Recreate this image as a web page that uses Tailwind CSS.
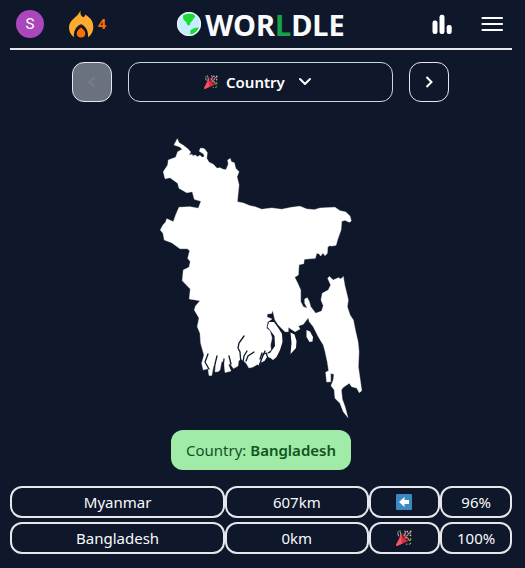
<!DOCTYPE html>
<html lang="en">
<head>
<meta charset="utf-8">
<meta name="viewport" content="width=device-width, initial-scale=1">
<title>Worldle</title>
<script src="https://cdn.jsdelivr.net/npm/@tailwindcss/browser@4"></script>
</head>
<body class="min-h-screen bg-[#0f172a] pr-[13px] pl-[10px] font-['Noto_Sans','Open_Sans',sans-serif] text-[15px] text-slate-50">
<svg class="hidden" aria-hidden="true">
  <symbol id="popper" viewBox="0 0 36 36">
    <path fill="#dd2e44" d="M11.6 7.6c-.2.2-.3.4-.4.6L.1 33.2c-.3 1.4 1 3 2.7 2.700L27.800 24.800c.2-.1.4-.2.6-.4 1.600-1.600-.9-6.600-5.400-11.200-4.700-4.600-9.800-7.200-11.400-5.600z"/>
    <path fill="#ea596e" d="M13 12 .4 32.600 0 33.700 2 36l12-5.500C12 25 11.500 18 13 12z"/>
    <path fill="#a0041e" d="M23 13.100c4.500 4.500 7 9.500 5.400 11.100-1.600 1.600-6.700-.9-11.200-5.400S10.400 9.400 12 7.800c1.500-1.600 6.600.8 11 5.300z"/>
    <path fill="none" stroke="#aa8dd8" stroke-width="2.600" stroke-linecap="round" d="M18 13c3-3 5-6 2-11M4 8l2 5"/>
    <path fill="none" stroke="#77b255" stroke-width="2.600" stroke-linecap="round" d="M10 14c3-3 0-6-1-12M20 18c4-3 8 0 9 4 1 3 5 2 4-3M30 32l3-2"/>
    <path fill="none" stroke="#aa8dd8" stroke-width="2.600" stroke-linecap="round" d="M22 14c2-2 5 0 5-4 0-3 3-4 6-3"/>
    <circle cx="25.500" cy="3.500" r="2" fill="#ffcc4d"/><circle cx="32.500" cy="12" r="2" fill="#ffcc4d"/><circle cx="5" cy="4" r="2" fill="#5c913b"/><circle cx="33" cy="3" r="2" fill="#ffcc4d"/><circle cx="24" cy="32" r="2" fill="#5c913b"/>
  </symbol>
</svg>

<header class="grid h-[50px] grid-cols-[1fr_auto_1fr] items-center border-b-2 border-gray-200">
  <div class="flex items-center pl-[6px]">
    <button class="flex size-7 items-center justify-center rounded-full bg-[#ab47bc] font-[Roboto,sans-serif] text-[15px] leading-none text-white" aria-label="Account">S</button>
    <div class="ml-6 flex items-center gap-1 text-sm font-bold text-[#ff6f00]">
      <svg class="h-7 w-[26px]" viewBox="0 0 26 28" aria-hidden="true">
        <path fill="#ffab30" d="M12.500.5c-.6 3.800.6 5.700 2.900 6.800 1.200-.4 1.700-1.500 1.600-2.800 6 3.500 8.300 7 8.300 12.500 0 4.300-1.700 7.800-5.300 10.200.6-5.500-2-11.200-7-12.900-4.900 1.700-7.700 7.300-7 12.900C2.700 24.700 1 21.500 1 17.500 1 9.500 9.300 8 12.500.5z"/>
        <path fill="#ff6f00" d="M13 17.500c2.700 2 4.300 4 4.300 6 0 2.600-1.900 4-4.300 4s-4.300-1.400-4.300-4c0-2 1.600-4 4.300-6z"/>
      </svg>
      <span>4</span>
    </div>
  </div>
  <h1 class="flex items-center gap-1 text-[29px] leading-none font-bold">
    <svg class="size-6" viewBox="0 0 24 24" aria-hidden="true">
      <circle cx="12" cy="12" r="12" fill="#c5ecff"/>
      <path fill="#1edb32" d="M6.200 3.500C8 1.700 15 1 17.800 3.300c.8 1.400 0 2.700-1.500 3.500-.4 2-1.800 3-3 3.800.3 1.400-.2 2.900-1.800 3-1.500-.4-1.600-2.300-2.800-4C6.500 8.500 5.500 5.500 6.200 3.500zM21.800 15.500c-3 .1-7 1-8.300 3-.9 1.400.3 2.300-.3 4 4.200-.4 7-3 8.600-7z"/>
      <circle cx="12" cy="12" r="11.600" fill="none" stroke="#fff" stroke-width=".8"/>
    </svg>
    <span>WOR<span class="text-[#16a34a]">L</span>DLE</span>
  </h1>
  <div class="flex items-center justify-end gap-[26px] pr-2">
    <button aria-label="Statistics">
      <svg class="size-6" viewBox="0 0 24 24" fill="#fff" aria-hidden="true"><rect x="2.500" y="8.500" width="5" height="13.500" rx="2.200"/><rect x="9.500" y="2.700" width="5" height="19.300" rx="2.200"/><rect x="16.700" y="13" width="5" height="9" rx="2.200"/></svg>
    </button>
    <button aria-label="Menu">
      <svg class="size-6" viewBox="0 0 24 24" fill="none" stroke="#fff" stroke-width="2.200" stroke-linecap="round" aria-hidden="true"><path d="M2.500 6h19.500M2.500 12h19.500M2.500 18h19.500"/></svg>
    </button>
  </div>
</header>

<main>
  <nav class="mt-3 grid grid-cols-[40px_1fr_40px] gap-4 pr-[63px] pl-[62px]">
    <button disabled aria-label="Previous round" class="flex h-10 items-center justify-center rounded-xl border border-gray-200 bg-gray-500">
      <svg class="size-4" viewBox="0 0 16 16" fill="none" stroke="#7c7c7c" stroke-width="2" aria-hidden="true"><path d="m10.500 3-5 5 5 5"/></svg>
    </button>
    <label class="flex h-10 items-center justify-center rounded-xl border border-slate-300 pr-1 font-semibold">
      <svg class="mr-2 size-[14px]" aria-hidden="true"><use href="#popper"/></svg>
      <select aria-label="Round" class="appearance-none bg-transparent text-white outline-none"><option>Country</option></select>
      <svg class="ml-3 size-4" viewBox="0 0 16 16" fill="none" stroke="#fff" stroke-width="2" stroke-linecap="round" stroke-linejoin="round" aria-hidden="true"><path d="m3 5 5 5 5-5"/></svg>
    </label>
    <button aria-label="Next round" class="flex h-10 items-center justify-center rounded-xl border border-gray-200">
      <svg class="size-4" viewBox="0 0 16 16" fill="none" stroke="#fff" stroke-width="2" aria-hidden="true"><path d="m5.500 3 5 5-5 5"/></svg>
    </button>
  </nav>

  <svg class="mx-auto mt-4 block h-[312px] w-[312px]" viewBox="105 118 312 312" role="img" aria-label="Country outline">
    <path fill="#fff" stroke="#fff" stroke-width=".4" stroke-linejoin="round" d="M177.300 138.700 179 142.700 183.300 145.300 187.700 148.700 190.700 152 189 155.300 192 154.200 193 156 195 155 197.700 156.700 200 155.300 202 157.300 204.300 156.700 203.700 154 199.300 151.300 200.300 148.300 203 148.200 205 149.300 207.300 152.700 206.700 158.300 209 162.300 213.300 164.300 217 168.300 220 167.700 223 169.300 226 169.700 228.300 164.300 227.700 160 230.300 158.500 231.300 161.700 234.300 162.700 235.700 168.300 239 171.700 237 176.700 239 185 237.300 201.700 243.300 203 250 205.700 255 206.700 261.700 209.300 271.700 208 281.700 209.300 291.700 207.300 300 206.300 306.700 209 314.300 209.700 320 208 335 207.300 340 210.700 345.700 212 350 216 351.300 221 349.300 222.300 345 220.300 341.700 221.300 341 230 337.700 239.300 336 245.300 332 246 329.500 245.700 327.700 247 327.300 253.300 325 255.700 323 253 320.700 256 319 253.700 316.700 253.300 315.300 258.300 304.300 259.300 303.700 263.700 299 264.700 298.300 275 294.700 277.300 297.700 283.300 300.700 290 300.700 301.700 303.300 306.700 307.300 308.300 304.700 303.300 304.700 299 307.300 297.700 309.300 301.700 310.700 306.700 314 311 315.700 313.300 321.700 311 323.300 305.700 321 300 322.300 293.300 328.300 290 330.700 285 327.700 278.300 329.300 276.500 333.300 280 338.300 277.700 341 279 343.300 276.500 344.700 285 346.700 293.300 348.300 300 347.300 306.700 350 315 353.300 320 355.700 331.700 358 341.700 359 351.700 358.300 366.700 360.700 383.300 361.700 390.700 359.300 392.700 356.700 388 351.700 386.700 349.300 383.300 343.300 387.300 341.300 390 342.300 399.300 345 406.700 347.900 417.500 343.300 411.700 340 403.300 335 398.300 334.300 390 331 385.700 333.300 380 334 374.300 330.700 373.300 330.700 381.700 326.700 382 325.700 372.300 328.700 370.700 327.300 361.700 325 351 323.300 345 318.300 336.700 313.300 326.700 309.300 321.700 308.300 317.700 303.300 324.300 298.300 326 300 329 295 331.700 288.300 327.300 288.300 331.700 285 331.700 278.300 325 275 320 272.700 310.500 271.500 313.500 267.300 314 267 317 272 319 267.500 322 266.500 328 270 331 272 338 270.500 345 271 350 267 353 263 353 260 358 258 364 253 367 249 368 246 363 241 359 238.500 361 238 366 233.500 368.500 230 363.500 228.500 365 231 371 225 372.500 224 363 221.700 361 220 370 218 371.700 215 371.700 216 362 213.500 366 211.700 375.500 209 375.500 208 368.500 203.300 370 201.700 363.300 204 355 200.700 343.300 200 333.300 197.300 326.700 199 318 194.300 310 195.500 306 200 300.700 189.300 299 190.300 289 182.300 280.700 183.300 270 189 267.300 190.300 261.700 187.700 258.300 189.700 250.700 187.300 248.700 180 248.700 171.700 242.700 164.300 240 163 233.300 160.300 230 163 225 165.700 222 166.700 218.700 173.300 221.700 175.700 215 179 207.300 190 206.700 198.300 208.300 201 201.300 194.300 199.300 192.300 191.700 186.700 192.700 179 188.300 177.700 183.300 170 177.700 165 178.700 163.300 171.700 167.700 165 168.300 160 175.700 157.300 177.700 151.700 182.300 149.300 179.300 146.700 174 145Z"/>
    <path fill="#fff" d="M269 322 274 322 279 329 282 334 282.500 342 280 350 276.500 357 273 360 270.500 358 267 357 264.500 361 261 362.500 259 366 257 364 260 357 265 354 270 353 275 346 274.500 336 270 330 267.500 327ZM290.500 332.500 294.500 334.500 296.500 341 296 348 290.500 354 291.500 343ZM306.500 330 310 331.500 313 337 312.500 341.500 309.500 342 306.500 337Z"/>
    <path fill="none" stroke="#0f172a" stroke-width="1.300" stroke-linecap="round" d="m244 336-5 7-1 5 2 4 1 12M247 351l-3 5-1 6M254 352l-6 4-2 5M265 351l-3 7-3 8M262 353l-2 6M266 353l2 5M224 359l-1 8M208 354l-3 8 4 7M217 356l-2 8M229 356l2 8"/>
  </svg>

  <p class="mx-auto flex h-10 w-fit items-center rounded-xl bg-[#9feba7] px-[15px] text-[#14531f]"><span>Country: <b class="font-semibold">Bangladesh</b></span></p>

  <table class="mt-4 block">
    <tbody class="grid gap-1 text-center">
      <tr class="grid h-8 grid-cols-[3fr_2fr_1fr_1fr] *:flex *:items-center *:justify-center *:rounded-xl *:border-2 *:border-gray-200">
        <td>Myanmar</td><td>607km</td>
        <td><svg class="size-4" viewBox="0 0 16 16" role="img" aria-label="West"><rect width="16" height="16" rx="1" fill="#3b88c3"/><path fill="#fff" d="m3 8 5.500-5v3H13v4H8.500v3z"/></svg></td>
        <td>96%</td>
      </tr>
      <tr class="grid h-8 grid-cols-[3fr_2fr_1fr_1fr] *:flex *:items-center *:justify-center *:rounded-xl *:border-2 *:border-gray-200">
        <td>Bangladesh</td><td>0km</td>
        <td><svg class="size-4" role="img" aria-label="Correct"><use href="#popper"/></svg></td>
        <td>100%</td>
      </tr>
    </tbody>
  </table>
</main>
</body>
</html>
